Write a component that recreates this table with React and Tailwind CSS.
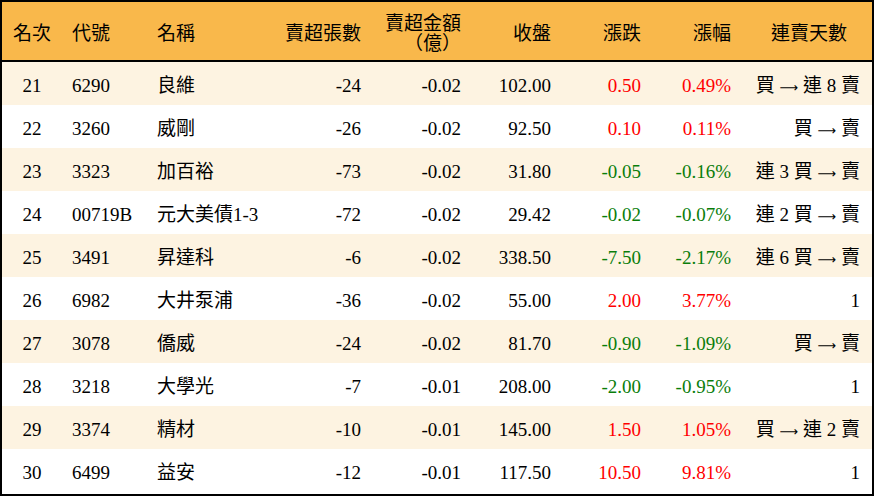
const rows = [
  { rank: 21, code: '6290', name: '良維', vol: '-24', amt: '-0.02', close: '102.00', chg: '0.50', pct: '0.49%', streak: ['買', '連 8 賣'] },
  { rank: 22, code: '3260', name: '威剛', vol: '-26', amt: '-0.02', close: '92.50', chg: '0.10', pct: '0.11%', streak: ['買', '賣'] },
  { rank: 23, code: '3323', name: '加百裕', vol: '-73', amt: '-0.02', close: '31.80', chg: '-0.05', pct: '-0.16%', streak: ['連 3 買', '賣'] },
  { rank: 24, code: '00719B', name: '元大美債1-3', vol: '-72', amt: '-0.02', close: '29.42', chg: '-0.02', pct: '-0.07%', streak: ['連 2 買', '賣'] },
  { rank: 25, code: '3491', name: '昇達科', vol: '-6', amt: '-0.02', close: '338.50', chg: '-7.50', pct: '-2.17%', streak: ['連 6 買', '賣'] },
  { rank: 26, code: '6982', name: '大井泵浦', vol: '-36', amt: '-0.02', close: '55.00', chg: '2.00', pct: '3.77%', streak: ['1'] },
  { rank: 27, code: '3078', name: '僑威', vol: '-24', amt: '-0.02', close: '81.70', chg: '-0.90', pct: '-1.09%', streak: ['買', '賣'] },
  { rank: 28, code: '3218', name: '大學光', vol: '-7', amt: '-0.01', close: '208.00', chg: '-2.00', pct: '-0.95%', streak: ['1'] },
  { rank: 29, code: '3374', name: '精材', vol: '-10', amt: '-0.01', close: '145.00', chg: '1.50', pct: '1.05%', streak: ['買', '連 2 賣'] },
  { rank: 30, code: '6499', name: '益安', vol: '-12', amt: '-0.01', close: '117.50', chg: '10.50', pct: '9.81%', streak: ['1'] },
];

const cols = 'grid grid-cols-[60px_85px_124px_90px_100px_90px_90px_90px_141px]';

function Streak({ parts }) {
  if (parts.length === 1) return parts[0];
  return (
    <>
      {parts[0]}{' '}
      <span className="font-['DejaVu_Sans',sans-serif] text-[13px]">⟶</span>
      {' '}{parts[1]}
    </>
  );
}

export default function App() {
  return (
    <div
      className="w-[874px] h-[496px] border-2 border-black bg-white text-black text-[19px]"
      style={{ fontFamily: '"Liberation Serif", "Noto Sans CJK TC", serif' }}
    >
      {/* 表頭 */}
      <div className={`${cols} h-[60px] items-center pt-[6px] bg-[#f9b84b] border-b-2 border-black leading-[20px]`}>
        <div className="text-center">名次</div>
        <div className="pl-[10px]">代號</div>
        <div className="pl-[10px]">名稱</div>
        <div className="text-right">賣超張數</div>
        <div className="text-right">
          <div>賣超金額</div>
          <div>（億）</div>
        </div>
        <div className="text-right">收盤</div>
        <div className="text-right">漲跌</div>
        <div className="text-right">漲幅</div>
        <div className="text-right pr-[25px]">連賣天數</div>
      </div>

      {rows.map((r, i) => {
        const up = !r.chg.startsWith('-');
        const color = up ? 'text-[#ff0000]' : 'text-[#0a7d0a]';
        return (
          <div
            key={r.rank}
            className={`${cols} h-[43px] items-center pt-[6px] ${i % 2 === 0 ? 'bg-[#fdf3e1]' : 'bg-white'}`}
          >
            <div className="text-center">{r.rank}</div>
            <div className="pl-[10px]">{r.code}</div>
            <div className="pl-[10px] whitespace-nowrap">{r.name}</div>
            <div className="text-right">{r.vol}</div>
            <div className="text-right">{r.amt}</div>
            <div className="text-right">{r.close}</div>
            <div className={`text-right ${color}`}>{r.chg}</div>
            <div className={`text-right ${color}`}>{r.pct}</div>
            <div className="text-right pr-[12px] whitespace-nowrap">
              <Streak parts={r.streak} />
            </div>
          </div>
        );
      })}
    </div>
  );
}
